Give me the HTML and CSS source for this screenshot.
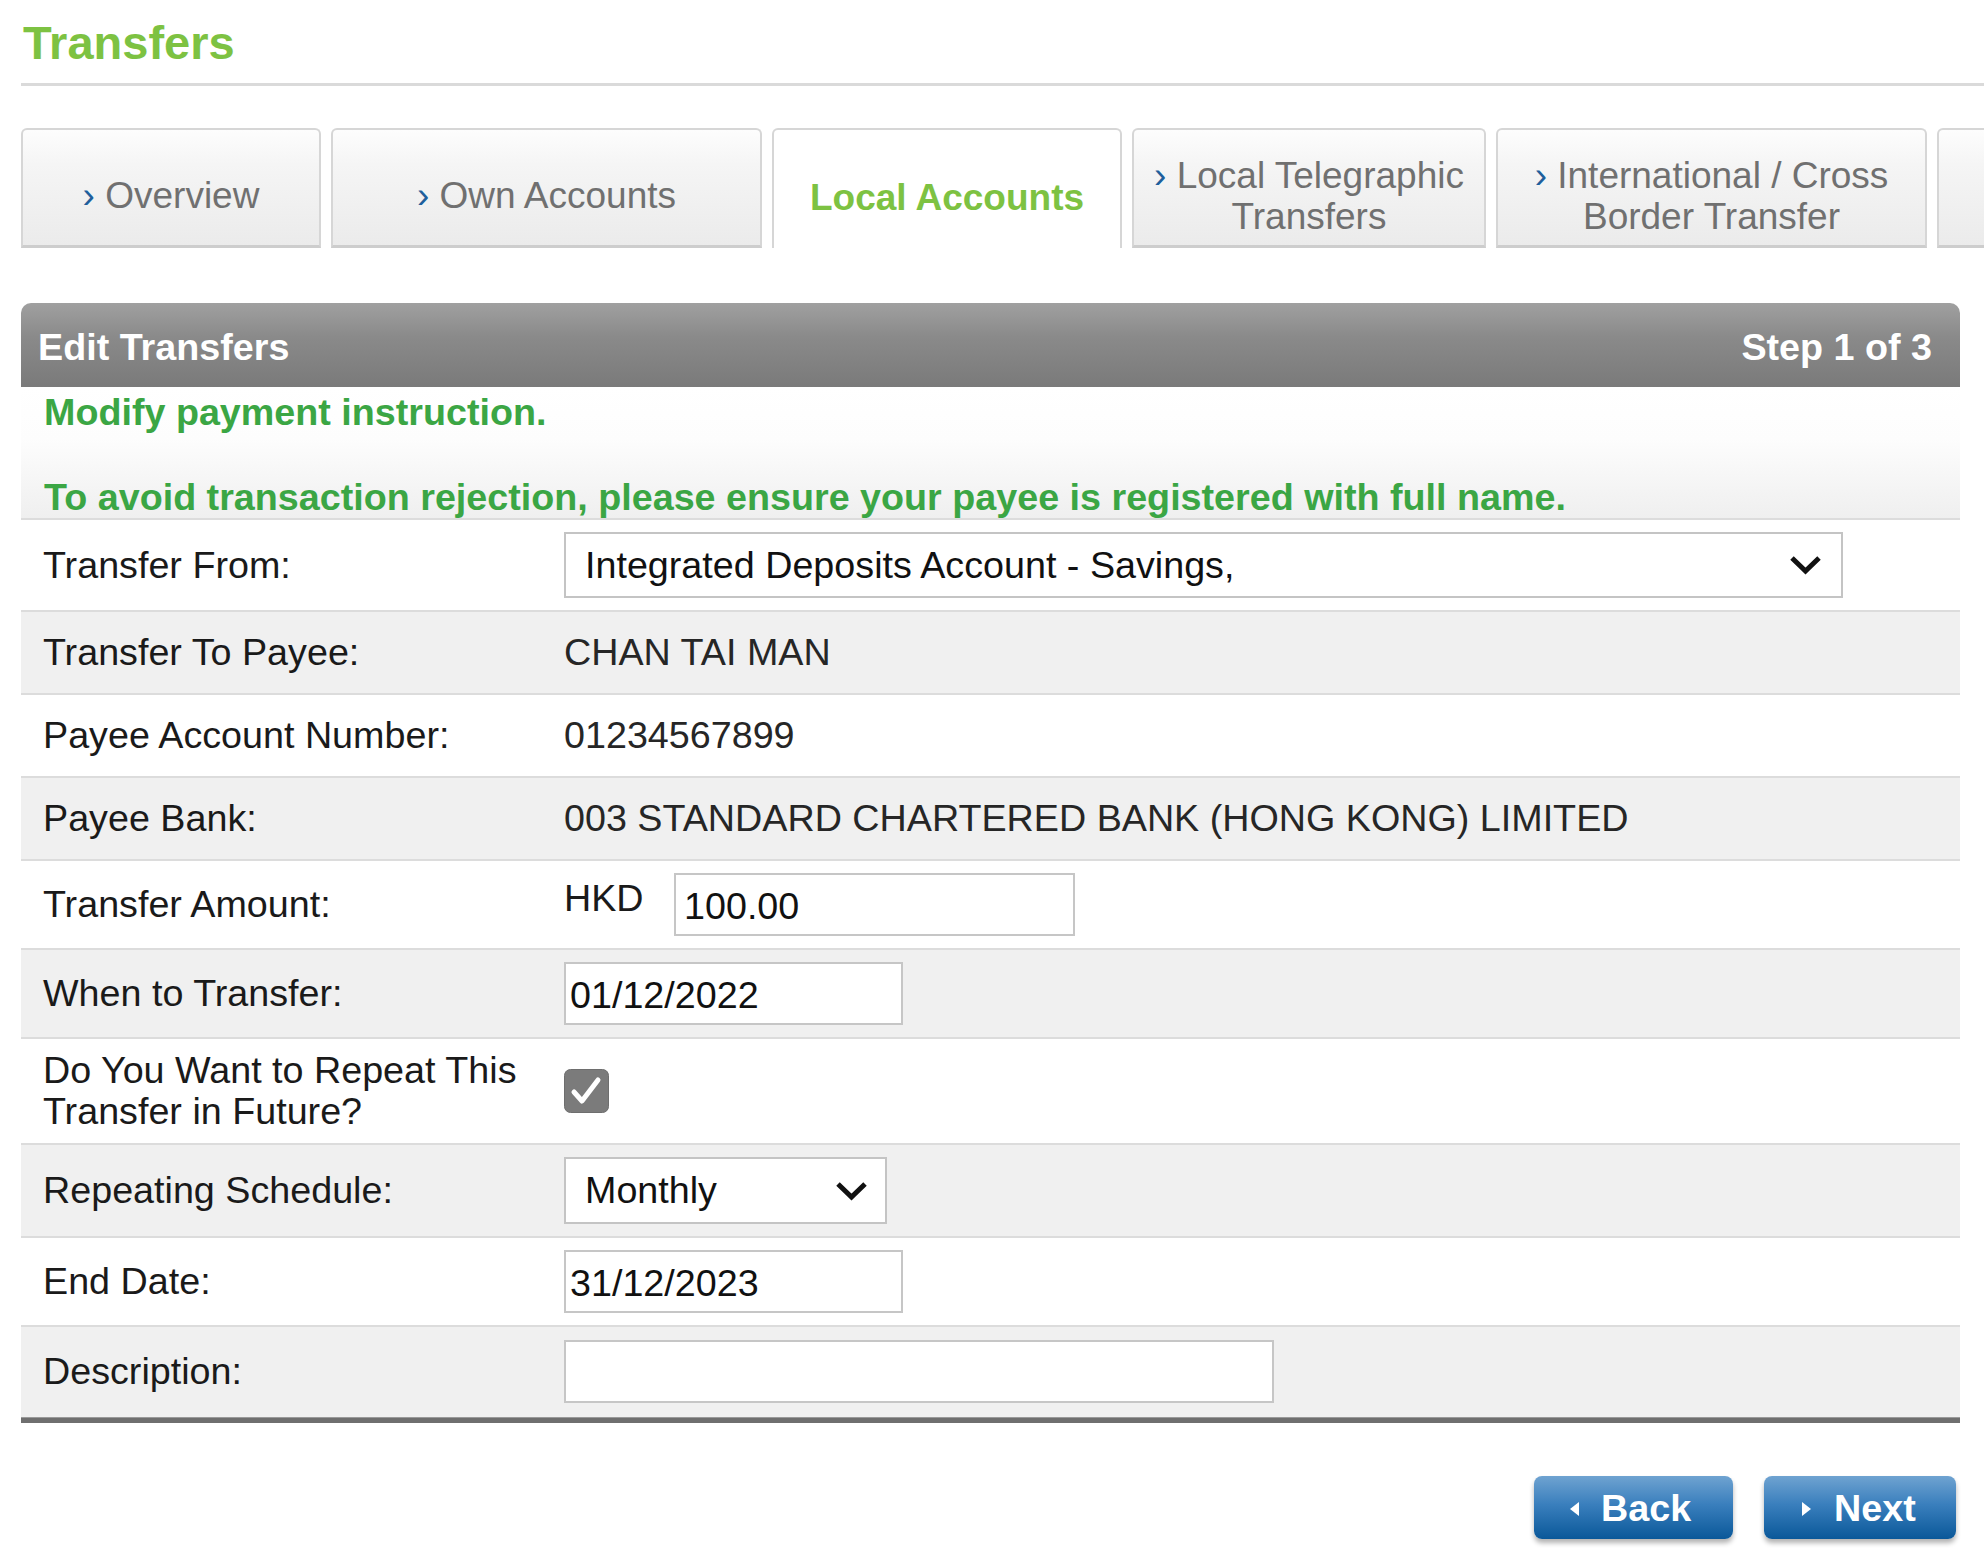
FILE: index.html
```html
<!DOCTYPE html>
<html lang="en">
<head>
<meta charset="utf-8">
<title>Transfers</title>
<link rel="stylesheet" href="styles.css">
</head>
<body>
<div class="page">
  <h1 class="page-title">Transfers</h1>
  <div class="title-rule"></div>

  <nav class="tabs">
    <a class="tab tab--overview" href="#"><span><span class="chev">›</span> Overview</span></a>
    <a class="tab tab--own" href="#"><span><span class="chev">›</span> Own Accounts</span></a>
    <a class="tab tab--local tab--active" href="#"><span>Local Accounts</span></a>
    <a class="tab tab--tt" href="#"><span><span class="chev">›</span> Local Telegraphic<br>Transfers</span></a>
    <a class="tab tab--intl" href="#"><span><span class="chev">›</span> International / Cross<br>Border Transfer</span></a>
    <a class="tab tab--more" href="#"><span></span></a>
  </nav>

  <section class="panel">
    <header class="panel-head">
      <h2 class="panel-title">Edit Transfers</h2>
      <span class="panel-step">Step 1 of 3</span>
    </header>

    <div class="intro">
      <p class="intro-line">Modify payment instruction.</p>
      <p class="intro-line intro-line--gap">To avoid transaction rejection, please ensure your payee is registered with full name.</p>
    </div>

    <div class="form">
      <div class="row">
        <div class="label">Transfer From:</div>
        <div class="value">
          <div class="select select--wide">
            <span class="select-text">Integrated Deposits Account - Savings,</span>
            <svg class="select-chev" width="33" height="20" viewBox="0 0 33 20"><polyline points="3,3 16.5,16 30,3" fill="none" stroke="#111" stroke-width="5" stroke-linejoin="miter"/></svg>
          </div>
        </div>
      </div>

      <div class="row row--alt row--text">
        <div class="label">Transfer To Payee:</div>
        <div class="value value--text">CHAN TAI MAN</div>
      </div>

      <div class="row row--text">
        <div class="label">Payee Account Number:</div>
        <div class="value value--text">01234567899</div>
      </div>

      <div class="row row--alt row--text">
        <div class="label">Payee Bank:</div>
        <div class="value value--text">003 STANDARD CHARTERED BANK (HONG KONG) LIMITED</div>
      </div>

      <div class="row">
        <div class="label">Transfer Amount:</div>
        <div class="value value--amount">
          <span class="currency">HKD</span>
          <input class="field field--amount" type="text" value="100.00">
        </div>
      </div>

      <div class="row row--alt">
        <div class="label">When to Transfer:</div>
        <div class="value"><input class="field field--date" type="text" value="01/12/2022"></div>
      </div>

      <div class="row row--check">
        <div class="label">Do You Want to Repeat This Transfer in Future?</div>
        <div class="value">
          <span class="checkbox">
            <svg width="45" height="44" viewBox="0 0 45 44"><rect x="0.5" y="0.5" width="44" height="43" rx="6" fill="#7b7b7b" stroke="#6e6e6e"/><polyline points="10,23 18,32 34,11" fill="none" stroke="#fff" stroke-width="5" stroke-linecap="round" stroke-linejoin="round"/></svg>
          </span>
        </div>
      </div>

      <div class="row row--alt">
        <div class="label">Repeating Schedule:</div>
        <div class="value">
          <div class="select select--short">
            <span class="select-text">Monthly</span>
            <svg class="select-chev" width="33" height="20" viewBox="0 0 33 20"><polyline points="3,3 16.5,16 30,3" fill="none" stroke="#111" stroke-width="5" stroke-linejoin="miter"/></svg>
          </div>
        </div>
      </div>

      <div class="row">
        <div class="label">End Date:</div>
        <div class="value"><input class="field field--date" type="text" value="31/12/2023"></div>
      </div>

      <div class="row row--alt row--last">
        <div class="label">Description:</div>
        <div class="value"><input class="field field--desc" type="text" value=""></div>
      </div>
    </div>
  </section>

  <div class="actions">
    <button class="btn btn--back" type="button"><span class="tri tri--left"></span>Back</button>
    <button class="btn btn--next" type="button"><span class="tri tri--right"></span>Next</button>
  </div>
</div>
</body>
</html>
```

FILE: styles.css
```css
html, body {
  margin: 0;
  padding: 0;
  background: #ffffff;
}

body {
  font-family: "Liberation Sans", Arial, Helvetica, sans-serif;
  font-size: 37.7px;
  color: #1c1c1c;
  overflow-x: hidden;
}

.page {
  padding-left: 21px;
  padding-bottom: 30px;
}

/* Title */
.page-title {
  margin: 16px 0 0 2px;
  font-size: 47px;
  line-height: 53px;
  font-weight: bold;
  color: #7dc242;
}

.title-rule {
  margin-top: 14px;
  height: 3px;
  background: #dadada;
}

/* Tabs */
.tabs {
  margin-top: 42px;
  display: flex;
  gap: 10px;
  overflow: hidden;
}

.tab {
  flex: 0 0 auto;
  box-sizing: border-box;
  height: 120px;
  padding-top: 16px;
  display: flex;
  align-items: center;
  justify-content: center;
  text-align: center;
  text-decoration: none;
  color: #707070;
  font-size: 37px;
  line-height: 41px;
  border: 2px solid #d6d6d6;
  border-bottom: 3px solid #cdcdcd;
  border-radius: 6px 6px 0 0;
  background: linear-gradient(#fdfdfd 0%, #f5f5f5 30%, #ebebeb 100%);
}

.chev {
  color: #1f5f9c;
}

.tab--overview { width: 300px; }
.tab--own { width: 431px; }
.tab--local { width: 350px; }
.tab--tt { width: 354px; }
.tab--intl { width: 431px; }
.tab--more { width: 300px; }

.tab--active {
  background: #ffffff;
  border-bottom: none;
  color: #7dc242;
  font-weight: bold;
  padding-top: 16px;
}

/* Panel */
.panel {
  margin-top: 55px;
  margin-right: 24px;
}

.panel-head {
  box-sizing: border-box;
  height: 84px;
  padding: 4px 28px 0 17px;
  display: flex;
  align-items: center;
  justify-content: space-between;
  border-radius: 10px 10px 0 0;
  background: linear-gradient(#a0a0a0 0%, #8a8a8a 40%, #7a7a7a 100%);
  color: #ffffff;
}

.panel-title,
.panel-step {
  margin: 0;
  font-size: 37.7px;
  line-height: 41px;
  font-weight: bold;
}

.intro {
  padding: 5px 22px 0 23px;
  background: linear-gradient(#ffffff 0%, #fdfdfd 40%, #efefef 100%);
  border-bottom: 2px solid #dcdcdc;
}

.intro-line {
  margin: 0;
  line-height: 41px;
  font-weight: bold;
  color: #3ba644;
}

.intro-line--gap {
  margin-top: 44px;
}

/* Form rows */
.row {
  display: grid;
  grid-template-columns: 521px 1fr;
  align-items: center;
  padding: 12px 0 12px 22px;
  border-bottom: 2px solid #dcdcdc;
  background: #ffffff;
}

.row--alt {
  background: #f0f0f0;
}

.row--text {
  padding-top: 20px;
  padding-bottom: 20px;
}

.row--check {
  padding-top: 11px;
  padding-bottom: 11px;
}

.row--last {
  padding-top: 13px;
  padding-bottom: 15px;
  border-bottom: 5px solid #6f6f6f;
  box-shadow: inset 0 -1px 0 #9a9a9a;
}

.label {
  line-height: 41px;
  color: #1a1a1a;
}

.value {
  display: flex;
  align-items: center;
  line-height: 41px;
}

.value--text {
  color: #262626;
}

.value--amount {
  align-items: flex-start;
}

.currency {
  margin-top: 5px;
  width: 110px;
  color: #1a1a1a;
}

/* Select look-alike */
.select {
  box-sizing: border-box;
  height: 66px;
  display: flex;
  align-items: center;
  justify-content: space-between;
  padding: 0 19px 0 19px;
  border: 2px solid #c4c4c4;
  background: #ffffff;
  color: #111111;
}

.select--wide { width: 1279px; }
.select--short { width: 323px; height: 67px; padding-right: 17px; }

.select-chev {
  display: block;
  flex: 0 0 auto;
}

/* Inputs */
.field {
  box-sizing: border-box;
  height: 63px;
  margin: 0;
  border: 2px solid #c6c6c6;
  background: #ffffff;
  font-family: "Liberation Sans", Arial, Helvetica, sans-serif;
  font-size: 37.7px;
  color: #111111;
  outline: none;
}

.field--amount { width: 401px; padding: 4px 8px 0 8px; }
.field--date { width: 339px; padding: 4px 4px 0 4px; }
.field--desc { width: 710px; padding: 0 4px; }

.checkbox {
  display: block;
  width: 45px;
  height: 44px;
}

.checkbox svg {
  display: block;
}

/* Buttons */
.actions {
  margin-top: 53px;
  margin-right: 28px;
  display: flex;
  justify-content: flex-end;
  gap: 31px;
}

.btn {
  box-sizing: border-box;
  height: 63px;
  display: flex;
  align-items: center;
  border: none;
  border-radius: 8px;
  background: linear-gradient(#6fa3d1 0%, #3a7fbd 45%, #0a5899 100%);
  box-shadow: 0 4px 5px rgba(0, 0, 0, 0.3);
  color: #ffffff;
  font-family: "Liberation Sans", Arial, Helvetica, sans-serif;
  font-size: 37.7px;
  font-weight: bold;
  line-height: 41px;
  cursor: pointer;
}

.btn--back { width: 199px; padding: 2px 0 0 36px; }
.btn--next { width: 192px; padding: 2px 0 0 38px; }

.tri {
  display: inline-block;
  width: 0;
  height: 0;
  border-top: 7px solid transparent;
  border-bottom: 7px solid transparent;
}

.tri--left {
  border-right: 9px solid #ffffff;
  margin-right: 22px;
}

.tri--right {
  border-left: 9px solid #ffffff;
  margin-right: 23px;
}
```
